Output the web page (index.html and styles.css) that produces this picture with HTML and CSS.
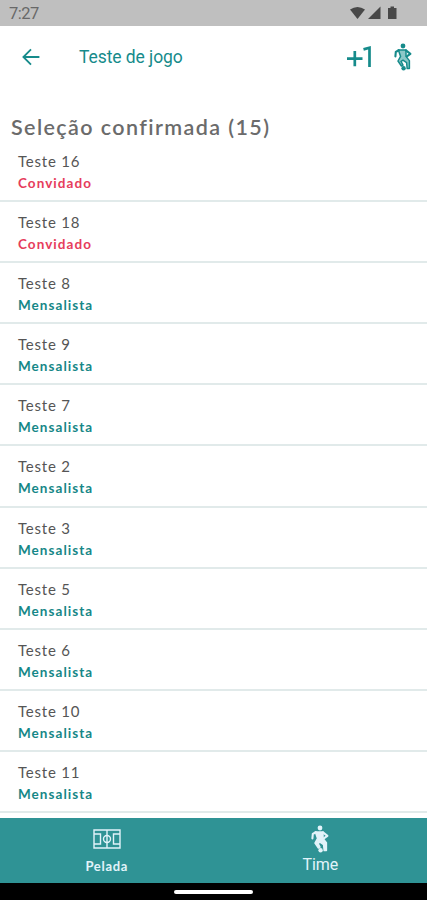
FILE: index.html
```html
<!DOCTYPE html>
<html lang="pt-BR">
<head>
  <meta charset="UTF-8" />
  <meta name="viewport" content="width=device-width, initial-scale=1" />
  <title>Teste de jogo</title>
  <link rel="stylesheet" href="styles.css">
</head>
<body>

<svg width="0" height="0" class="sprite">
  <symbol id="jogador" viewBox="0 0 18 28">
    <circle cx="9" cy="3" r="2.4" fill="currentColor"/>
    <path class="tronco" d="M4.4 7 H12 L12 13.4 L15.4 17.6 L15.4 25.6 L13.2 25.6 L12.6 19.6 L9 17.2 L7 18.4 L9 22 L7.4 23 L4 18 L6.6 13.4 Z"/>
    <path d="M4.8 7.2 L1.8 9 L1.4 13.4 M12 7.4 L16.4 10.8 L12.8 13.4" fill="none" stroke="currentColor" stroke-width="2.1" stroke-linejoin="round" stroke-linecap="round"/>
    <circle cx="9.6" cy="25.2" r="2.2" fill="currentColor"/>
  </symbol>
</svg>

<div class="status">
  <span class="hora">7:27</span>
  <svg class="status-icons" width="52" height="16" viewBox="0 0 52 16">
    <path d="M0 4.6 Q7.5 -0.8 15 4.6 L7.5 14 Z"/>
    <path d="M30.5 1.5 V14 H18 Z"/>
    <path d="M38 3 H40.5 V1.5 H44 V3 H46.5 V14 H38 Z"/>
  </svg>
</div>

<header>
  <svg class="voltar" width="18" height="18" viewBox="0 0 18 18">
    <path d="M17.4 9 H1.6 M9 1.4 L1.4 9 L9 16.6"/>
  </svg>
  <h1>Teste de jogo</h1>
  <svg class="mais-um" width="25" height="22" viewBox="0 0 25 22">
    <path d="M0 12.6 H15.5 M7.8 5 V20.2 M16.5 3.4 L22.5 1.8 V21"/>
  </svg>
  <svg class="icone-jogador" width="18" height="28"><use href="#jogador"/></svg>
</header>

<main>
  <h2>Seleção confirmada (15)</h2>
  <ul>
    <li><span class="nome">Teste 16</span><span class="tipo convidado">Convidado</span></li>
    <li><span class="nome">Teste 18</span><span class="tipo convidado">Convidado</span></li>
    <li><span class="nome">Teste 8</span><span class="tipo">Mensalista</span></li>
    <li><span class="nome">Teste 9</span><span class="tipo">Mensalista</span></li>
    <li><span class="nome">Teste 7</span><span class="tipo">Mensalista</span></li>
    <li><span class="nome">Teste 2</span><span class="tipo">Mensalista</span></li>
    <li><span class="nome">Teste 3</span><span class="tipo">Mensalista</span></li>
    <li><span class="nome">Teste 5</span><span class="tipo">Mensalista</span></li>
    <li><span class="nome">Teste 6</span><span class="tipo">Mensalista</span></li>
    <li><span class="nome">Teste 10</span><span class="tipo">Mensalista</span></li>
    <li><span class="nome">Teste 11</span><span class="tipo">Mensalista</span></li>
  </ul>
</main>

<nav>
  <a class="aba ativa">
    <svg class="campo" width="28" height="20" viewBox="0 0 28 20">
      <path d="M1 1 H27 V19 H1 Z M14 1 V19 M1 5 H7.5 V15 H1 M27 5 H20.5 V15 H27"/>
      <circle cx="14" cy="10" r="3.5"/>
    </svg>
    <span>Pelada</span>
  </a>
  <a class="aba">
    <svg class="icone-jogador" width="18" height="28"><use href="#jogador"/></svg>
    <span>Time</span>
  </a>
</nav>

<div class="gestos"><span></span></div>

</body>
</html>
```

FILE: styles.css
```css
body {
  margin: 0;
  height: 900px;
  display: flex;
  flex-direction: column;
  overflow: hidden;
  background: #fff;
  font-family: Lato, "Open Sans", sans-serif;
}
.sprite {
  display: none;
}
.tronco {
  fill: var(--tronco, #8cc8c8);
  stroke: currentColor;
  stroke-width: 1.5;
  stroke-linejoin: round;
}
.status {
  height: 26px;
  flex: none;
  box-sizing: border-box;
  padding: 0 25px 0 9px;
  display: flex;
  justify-content: space-between;
  align-items: center;
  background: #bfbfbf;
  color: #686868;
}
.hora {
  font: 16.5px/28px Roboto, sans-serif;
  letter-spacing: -0.5px;
  padding-top: 2px;
}
.status-icons {
  fill: #484848;
}
header {
  height: 62px;
  flex: none;
  box-sizing: border-box;
  padding: 0 15px 0 22px;
  display: flex;
  align-items: center;
  color: #168b8b;
}
header h1 {
  margin: 0 auto 0 39px;
  font: 17.5px/24px Roboto, sans-serif;
  letter-spacing: -0.08px;
}
.voltar {
  fill: none;
  stroke: currentColor;
  stroke-width: 1.8;
}
.mais-um {
  margin-right: 22px;
  fill: none;
  stroke: currentColor;
  stroke-width: 2.7;
}
main {
  flex: 1;
  min-height: 0;
  overflow: hidden;
}
h2 {
  margin: 26px 0 0 11px;
  font-size: 21.5px;
  line-height: 27px;
  font-weight: 600;
  letter-spacing: 1.4px;
  color: #6b6b6b;
}
ul {
  list-style: none;
  margin: 0;
  padding: 0;
}
li {
  height: 61.1px;
  box-sizing: border-box;
  padding: 9px 18px 0;
  display: flex;
  flex-direction: column;
  border-bottom: 2px solid #e1eaea;
}
.nome {
  font-size: 15px;
  line-height: 22px;
  letter-spacing: 0.8px;
  color: #555;
}
.tipo {
  font-size: 13.5px;
  line-height: 22px;
  font-weight: bold;
  letter-spacing: 1.05px;
  color: #168787;
}
.convidado {
  color: #e63c5c;
}
nav {
  height: 65px;
  flex: none;
  display: flex;
  background: #2f9395;
}
.aba {
  flex: 1;
  display: flex;
  flex-direction: column;
  align-items: center;
  color: #e2f3fa;
}
.aba .icone-jogador {
  margin-top: 7px;
  --tronco: currentColor;
}
.aba span {
  font: 16px/24px Roboto, sans-serif;
  letter-spacing: -0.1px;
}
.campo {
  margin-top: 11px;
  fill: none;
  stroke: currentColor;
  stroke-width: 1.4;
}
.ativa span {
  margin-top: 6px;
  font: bold 13px/22px Lato, sans-serif;
  letter-spacing: 0.7px;
}
.gestos {
  height: 17px;
  flex: none;
  display: flex;
  justify-content: center;
  align-items: center;
  background: #000;
}
.gestos span {
  width: 79px;
  height: 4px;
  border-radius: 2px;
  background: #fff;
}
```
